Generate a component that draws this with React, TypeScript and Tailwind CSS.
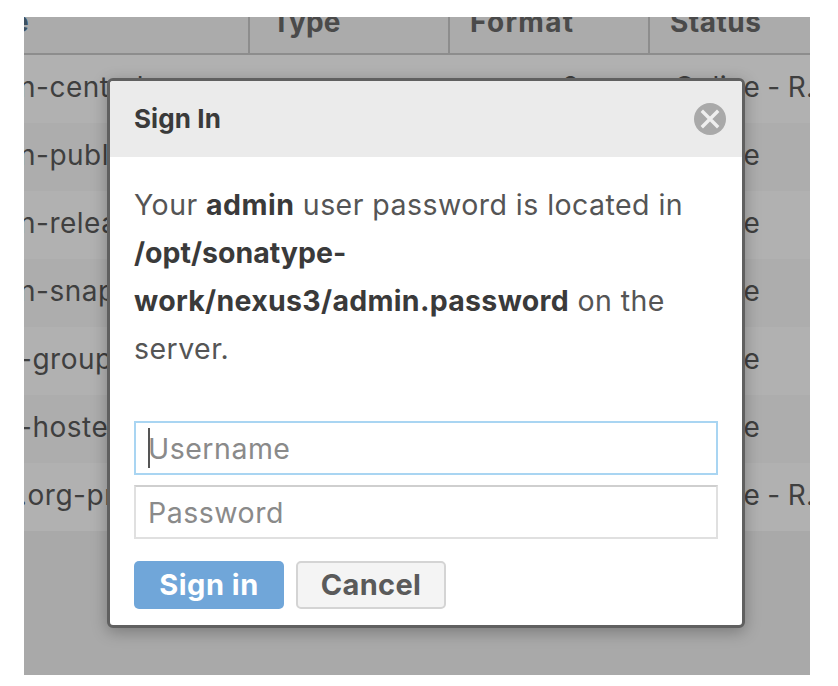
const rows = [
  { name: 'n-central', format: 'maven2', status: 'Online - R...' },
  { name: 'n-public', format: 'maven2', status: 'Online' },
  { name: 'n-releases', format: 'maven2', status: 'Online' },
  { name: 'n-snapshots', format: 'maven2', status: 'Online' },
  { name: '-group', format: 'nuget', status: 'Online' },
  { name: '-hosted', format: 'nuget', status: 'Online' },
  { name: '.org-proxy', format: 'nuget', status: 'Online - R...' },
];

function RepositoryTable() {
  return (
    <div className="flex h-full w-full flex-col bg-[#a9a9a9] text-[28px] text-[#3f3f3f]">
      <div className="flex h-[38px] shrink-0 border-b-2 border-[#8d8d8d] bg-[#ababab] font-bold text-[#4a4a4a]">
        <div className="w-[226px] shrink-0 border-r-2 border-[#8d8d8d] leading-[10px]"><span className="-ml-[12px] text-[#3d5060]">e</span></div>
        <div className="w-[200px] shrink-0 border-r-2 border-[#8d8d8d] pl-[22px] leading-[10px] tracking-[0.1px]">Type</div>
        <div className="w-[200px] shrink-0 border-r-2 border-[#8d8d8d] pl-[20px] leading-[10px] tracking-[1.3px]">Format</div>
        <div className="flex-1 pl-[20px] leading-[10px] tracking-[0.5px]">Status</div>
      </div>
      {rows.map((row) => (
        <div key={row.name} className="flex h-[68px] shrink-0 bg-[#b1b1b1] leading-[65px] odd:bg-[#adadad]">
          <div className="w-[226px] shrink-0 whitespace-nowrap tracking-[0.5px]"><span className="-ml-[5px]">{row.name}</span></div>
          <div className="w-[200px] shrink-0" />
          <div className="w-[200px] shrink-0 pl-[22px] tracking-[0.4px]">{row.format}</div>
          <div className="w-[170px] shrink-0 whitespace-nowrap pl-[24px] tracking-[0.3px] [word-spacing:-1px]">{row.status}</div>
        </div>
      ))}
    </div>
  );
}

function SignInDialog() {
  return (
    <div className="absolute left-[83px] top-[61px] flex h-[550px] w-[638px] flex-col overflow-hidden rounded-[6px] border-[3px] border-[#606060] bg-white shadow-[0_4px_16px_rgba(0,0,0,0.28)]">
      <div className="flex h-[76px] shrink-0 items-center justify-between bg-[#ebebeb] pl-[24px] pr-[16px]">
        <h1 className="pb-px text-[26px] font-bold tracking-[0.1px] text-[#3a3a3a]">Sign In</h1>
        <svg className="size-8" viewBox="0 0 32 32" aria-label="Close">
          <circle cx="16" cy="16" r="16" fill="#a9a9a9" />
          <path d="M7.8 7.8L24.2 24.2M24.2 7.8L7.8 24.2" stroke="#efefef" strokeWidth="3.4" />
        </svg>
      </div>
      <div className="flex flex-col pl-[24px] pr-[24px] pt-[24px]">
        <p className="whitespace-nowrap text-[28.5px] leading-[48px] tracking-[0.45px] text-[#555555]">
          Your <b className="font-bold text-[#3a3a3a]">admin</b> user password is located in<br />
          <b className="font-bold tracking-[0px] text-[#3a3a3a]">/opt/sonatype-</b><br />
          <b className="font-bold tracking-[0.3px] text-[#3a3a3a]">work/nexus3/admin.password</b> on the<br />
          server.
        </p>
        <div className="mt-[48px] flex h-[54px] items-center border-2 border-[#a9d5f2] pl-[12px] text-[28.5px] tracking-[0.5px] text-[#8a8a8a]">
          <span className="h-[40px] w-[2px] bg-[#555555]" />
          <span className="-ml-[2px] pt-[2px]">Username</span>
        </div>
        <div className="mt-[10px] flex h-[54px] items-center border-2 border-[#e0e0e0] border-t-[#cfcfcf] pl-[12px] pt-[2px] text-[28.5px] tracking-[0.5px] text-[#8a8a8a]">
          Password
        </div>
        <div className="mt-[22px] flex gap-[12px] text-[29px] font-bold">
          <button className="h-[48px] w-[150px] rounded-[5px] bg-[#70a6d9] pb-px tracking-[0.5px] text-white">Sign in</button>
          <button className="h-[48px] w-[150px] rounded-[5px] border-2 border-[#d4d4d4] bg-[#f4f4f4] pb-px tracking-[0.3px] text-[#5a5a5a]">Cancel</button>
        </div>
      </div>
    </div>
  );
}

export default function App() {
  return (
    <div className="h-[686px] w-[838px] bg-white pl-[24px] pt-[17px] font-['Inter','Liberation_Sans',sans-serif]">
      <div className="relative h-[658px] w-[786px] overflow-hidden">
        <RepositoryTable />
        <SignInDialog />
      </div>
    </div>
  );
}
